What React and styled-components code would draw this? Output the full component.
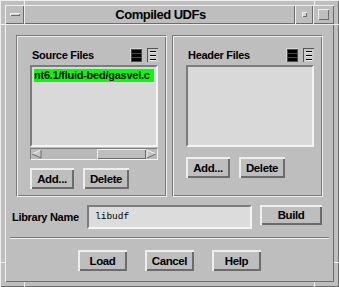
import React from "react";
import styled, { createGlobalStyle, css } from "styled-components";

const GlobalStyle = createGlobalStyle`
  html, body {
    margin: 0;
    padding: 0;
    background: #bebebe;
  }
  body {
    font-family: "Liberation Sans", Arial, sans-serif;
  }
`;

const LIGHT = "#eeeeee";
const DARK = "#6c6c6c";

const raised = (w) => css`
  box-shadow: inset ${w}px ${w}px 0 ${LIGHT}, inset -${w}px -${w}px 0 ${DARK};
`;

const sunken = css`
  border: 2px solid;
  border-color: #7c7c7c #f4f4f4 #f4f4f4 #7c7c7c;
`;

const Frame = styled.div`
  position: relative;
  width: 339px;
  height: 287px;
  box-sizing: border-box;
  padding: 5px;
  background: #bebebe;
  display: flex;
  flex-direction: column;
  ${raised(1)}
`;

const Notch = styled.span`
  position: absolute;
  background: ${LIGHT};
  ${({ $side }) =>
    $side === "top"
      ? css`top: 0; width: 1px; height: 5px;`
      : $side === "bottom"
      ? css`bottom: 0; width: 1px; height: 5px;`
      : $side === "left"
      ? css`left: 0; width: 5px; height: 1px;`
      : css`right: 0; width: 5px; height: 1px;`}
`;

const TitleBar = styled.div`
  display: flex;
  height: 19px;
`;

const TitlePart = styled.div`
  flex: ${({ $grow }) => ($grow ? 1 : "none")};
  width: ${({ $w }) => ($w ? `${$w}px` : "auto")};
  display: flex;
  align-items: center;
  justify-content: center;
  ${raised(1)}
`;

const Title = styled.span`
  font-weight: bold;
  font-size: 13px;
  letter-spacing: -0.5px;
  color: #000;
  padding-left: 2px;
`;

const MenuGlyph = styled.span`
  width: 10px;
  height: 3px;
  background: #d4d4d4;
  ${raised(1)}
`;

const MinGlyph = styled.span`
  width: 5px;
  height: 5px;
  background: #d4d4d4;
  ${raised(1)}
`;

const MaxGlyph = styled.span`
  width: 11px;
  height: 11px;
  ${raised(1)}
`;

const Client = styled.div`
  height: 258px;
  box-sizing: border-box;
  padding: 11px 6px 0 6px;
  display: flex;
  flex-direction: column;
  ${raised(1)}
`;

const Groups = styled.div`
  display: flex;
  gap: 5px;
  padding: 0 5px;
`;

const Group = styled.div`
  width: 151px;
  height: 162px;
  box-sizing: border-box;
  padding: 12px 8px 0 13px;
  border: 1px solid;
  border-color: #7a7a7a ${LIGHT} ${LIGHT} #7a7a7a;
  box-shadow: inset 1px 1px 0 ${LIGHT}, inset -1px -1px 0 #7a7a7a;
  display: flex;
  flex-direction: column;
`;

const GroupHead = styled.div`
  display: flex;
  align-items: center;
  height: 14px;
  gap: 5px;
`;

const Label = styled.span`
  font-weight: bold;
  font-size: 11px;
  letter-spacing: -0.3px;
  color: #000;
  white-space: nowrap;
`;

const HeadLabel = styled(Label)`
  flex: 1;
  margin-left: 2px;
`;

const List = styled.div`
  margin-top: 3px;
  height: 82px;
  box-sizing: border-box;
  background: #d9d9d9;
  padding: 2px;
  overflow: hidden;
  ${sunken}
`;

const Item = styled.div`
  height: 13px;
  background: ${({ $selected }) => ($selected ? "#00ff00" : "transparent")};
  font-weight: bold;
  font-size: 11px;
  letter-spacing: -0.25px;
  line-height: 13px;
  white-space: nowrap;
  overflow: hidden;
  color: #000;
`;

const ScrollBar = styled.div`
  margin-top: 1px;
  height: 12px;
  box-sizing: border-box;
  display: flex;
  align-items: center;
  background: #b9b9b9;
  border: 1px solid;
  border-color: #7c7c7c #f4f4f4 #f4f4f4 #7c7c7c;
`;

const Trough = styled.div`
  flex: 1;
  height: 10px;
  display: flex;
  justify-content: flex-end;
`;

const Thumb = styled.div`
  width: 49px;
  height: 10px;
  box-sizing: border-box;
  background: #bebebe;
  ${raised(1)}
`;

const ButtonRow = styled.div`
  display: flex;
  gap: ${({ $gap }) => $gap}px;
  margin-top: ${({ $top }) => $top}px;
  justify-content: ${({ $center }) => ($center ? "center" : "flex-start")};
`;

const Button = styled.button`
  width: ${({ $w }) => $w}px;
  height: ${({ $h }) => $h || 21}px;
  padding: 0;
  border: none;
  background: #bebebe;
  font-family: "Liberation Sans", Arial, sans-serif;
  font-weight: bold;
  font-size: 11.5px;
  letter-spacing: -0.4px;
  color: #000;
  ${raised(2)}
`;

const LibRow = styled.div`
  display: flex;
  align-items: flex-start;
  margin-top: 8px;
`;

const LibLabel = styled(Label)`
  width: 76px;
  line-height: 24px;
  padding-left: 1px;
  box-sizing: border-box;
`;

const Field = styled.div`
  width: 165px;
  height: 24px;
  box-sizing: border-box;
  background: #dcdcdc;
  padding-left: 6px;
  font-family: "Liberation Mono", "DejaVu Sans Mono", monospace;
  font-size: 9.5px;
  line-height: 20px;
  color: #000;
  ${sunken}
`;

const Separator = styled.div`
  margin: 8px -1px 0;
  height: 1px;
  background: #7a7a7a;
  border-bottom: 1px solid ${LIGHT};
`;

const DenseIcon = () => (
  <svg width="12" height="14" viewBox="0 0 12 14">
    <rect width="12" height="14" fill="#d6d6d6" />
    <rect x="1" y="1" width="11" height="13" fill="#4a4a4a" />
    <rect x="2" y="2" width="9" height="3" fill="#000" />
    <rect x="2" y="6" width="9" height="3" fill="#000" />
    <rect x="2" y="10" width="9" height="3" fill="#000" />
  </svg>
);

const SparseIcon = () => (
  <svg width="11" height="14" viewBox="0 0 11 14">
    <rect width="11" height="14" fill="#555" />
    <rect x="1" y="1" width="10" height="13" fill="#c9c9c9" />
    <rect x="3" y="3" width="6" height="1" fill="#000" />
    <rect x="3" y="7" width="6" height="1" fill="#000" />
    <rect x="3" y="11" width="6" height="1" fill="#000" />
    <rect x="3" y="4" width="6" height="1" fill="#e8e8e8" />
    <rect x="3" y="8" width="6" height="1" fill="#e8e8e8" />
    <rect x="3" y="12" width="6" height="1" fill="#e8e8e8" />
  </svg>
);

const Arrow = ({ dir }) => (
  <svg width="11" height="10" viewBox="0 0 11 10">
    {dir === "left" ? (
      <>
        <polygon points="1,5 10,1 10,9" fill="#c4c4c4" />
        <polyline points="10,1 1,5" stroke="#f2f2f2" fill="none" />
        <polyline points="1,5 10,9 10,1" stroke="#6c6c6c" fill="none" />
      </>
    ) : (
      <>
        <polygon points="10,5 1,1 1,9" fill="#c4c4c4" />
        <polyline points="1,9 1,1 10,5" stroke="#f2f2f2" fill="none" />
        <polyline points="10,5 1,9" stroke="#6c6c6c" fill="none" />
      </>
    )}
  </svg>
);

const FileGroup = ({ title, items, scroll, buttonsTop }) => (
  <Group>
    <GroupHead>
      <HeadLabel>{title}</HeadLabel>
      <DenseIcon />
      <SparseIcon />
    </GroupHead>
    <List>
      {items.map((it) => (
        <Item key={it} $selected>
          {it}
        </Item>
      ))}
    </List>
    {scroll && (
      <ScrollBar>
        <Arrow dir="left" />
        <Trough>
          <Thumb />
        </Trough>
        <Arrow dir="right" />
      </ScrollBar>
    )}
    <ButtonRow $gap={9} $top={buttonsTop}>
      <Button $w={44}>Add...</Button>
      <Button $w={46}>Delete</Button>
    </ButtonRow>
  </Group>
);

const App = () => (
  <>
    <GlobalStyle />
    <Frame>
      <Notch $side="top" style={{ left: 24 }} />
      <Notch $side="top" style={{ right: 24 }} />
      <Notch $side="bottom" style={{ left: 24 }} />
      <Notch $side="bottom" style={{ right: 24 }} />
      <Notch $side="left" style={{ top: 24 }} />
      <Notch $side="left" style={{ bottom: 24 }} />
      <Notch $side="right" style={{ top: 24 }} />
      <Notch $side="right" style={{ bottom: 24 }} />
      <TitleBar>
        <TitlePart $w={19}>
          <MenuGlyph />
        </TitlePart>
        <TitlePart $grow>
          <Title>Compiled UDFs</Title>
        </TitlePart>
        <TitlePart $w={18}>
          <MinGlyph />
        </TitlePart>
        <TitlePart $w={21}>
          <MaxGlyph />
        </TitlePart>
      </TitleBar>
      <Client>
        <Groups>
          <FileGroup
            title="Source Files"
            items={["nt6.1/fluid-bed/gasvel.c"]}
            scroll
            buttonsTop={8}
          />
          <FileGroup title="Header Files" items={[]} buttonsTop={10} />
        </Groups>
        <LibRow>
          <LibLabel>Library Name</LibLabel>
          <Field>libudf</Field>
          <Button $w={62} $h={20} style={{ marginLeft: 8 }}>
            Build
          </Button>
        </LibRow>
        <Separator />
        <ButtonRow $gap={18} $top={11} $center>
          <Button $w={49}>Load</Button>
          <Button $w={49}>Cancel</Button>
          <Button $w={49}>Help</Button>
        </ButtonRow>
      </Client>
    </Frame>
  </>
);

export default App;
